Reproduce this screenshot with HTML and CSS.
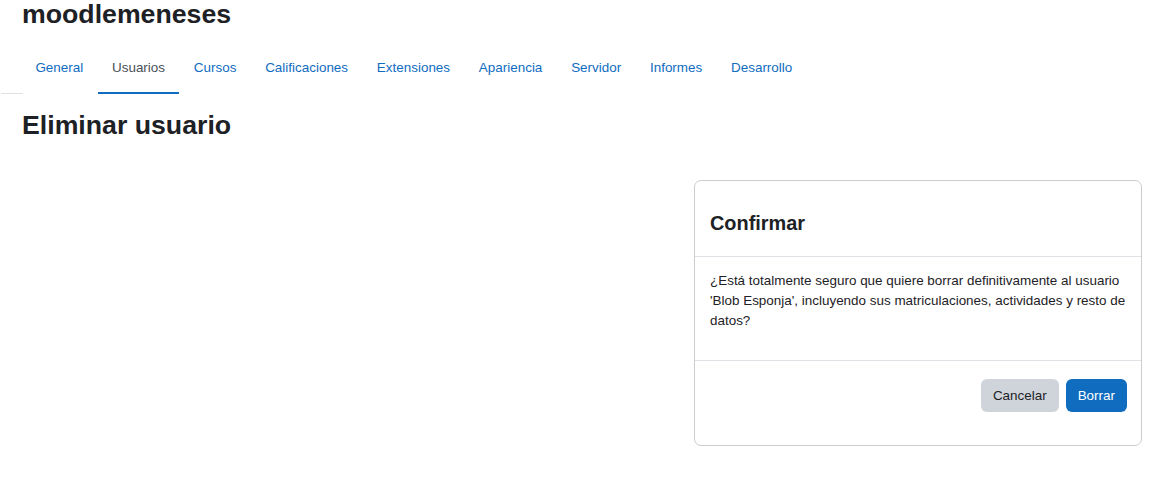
FILE: index.html
```html
<!DOCTYPE html>
<html lang="es">
<head>
<meta charset="utf-8">
<title>Eliminar usuario</title>
<link rel="stylesheet" href="styles.css">
</head>
<body>
<div class="page">
  <header class="page-header">
    <h1 class="site-title">moodlemeneses</h1>
  </header>
  <nav class="secondary-nav">
    <span class="nav-edge"></span>
    <ul class="nav-tabs">
      <li><a class="nav-link" href="#">General</a></li>
      <li><a class="nav-link active" href="#">Usuarios</a></li>
      <li><a class="nav-link" href="#">Cursos</a></li>
      <li><a class="nav-link" href="#">Calificaciones</a></li>
      <li><a class="nav-link" href="#">Extensiones</a></li>
      <li><a class="nav-link" href="#">Apariencia</a></li>
      <li><a class="nav-link" href="#">Servidor</a></li>
      <li><a class="nav-link" href="#">Informes</a></li>
      <li><a class="nav-link" href="#">Desarrollo</a></li>
    </ul>
  </nav>
  <main class="main">
    <h2 class="page-title">Eliminar usuario</h2>
    <div class="confirm-row">
      <div class="confirm-card">
        <div class="card-header">
          <h4 class="card-title">Confirmar</h4>
        </div>
        <div class="card-body">
          <p>¿Está totalmente seguro que quiere borrar definitivamente al usuario 'Blob Esponja', incluyendo sus matriculaciones, actividades y resto de datos?</p>
        </div>
        <div class="card-footer">
          <button class="btn btn-secondary" type="button">Cancelar</button>
          <button class="btn btn-primary" type="button">Borrar</button>
        </div>
      </div>
    </div>
  </main>
</div>
</body>
</html>
```

FILE: styles.css
```css
* {
  box-sizing: border-box;
}

html, body {
  margin: 0;
  padding: 0;
  background: #ffffff;
}

body {
  font-family: "Liberation Sans", Arial, sans-serif;
  font-size: 13.45px;
  line-height: 1.5;
  color: #1d2125;
  width: 1160px;
  height: 480px;
  overflow: hidden;
}

.page-header {
  padding: 0 22px;
}

.site-title {
  margin: -2px 0 0 0;
  font-size: 26.7px;
  line-height: 32px;
  font-weight: 700;
  color: #1d2125;
}

.secondary-nav {
  display: flex;
  align-items: flex-end;
  margin-top: 11px;
}

.nav-edge {
  display: block;
  width: 22px;
  height: 1px;
  background: #dee2e6;
  margin-left: 1px;
}

.nav-tabs {
  display: flex;
  list-style: none;
  margin: 0 0 0 -2px;
  padding: 0;
}

.nav-link {
  display: flex;
  align-items: center;
  height: 53px;
  padding: 3px 14.4px 0;
  color: #0f6cbf;
  text-decoration: none;
  border-bottom: 2px solid transparent;
}

.nav-link.active {
  color: #495057;
  border-bottom-color: #0f6cbf;
}

.main {
  padding: 0 18px 0 22px;
}

.page-title {
  margin: 14px 0 0 0;
  font-size: 26.7px;
  line-height: 34px;
  font-weight: 700;
  color: #1d2125;
}

.confirm-row {
  display: flex;
  justify-content: flex-end;
  margin-top: 38px;
}

.confirm-card {
  width: 448px;
  border: 1px solid #cdcdcd;
  border-radius: 7px;
  background: #fff;
}

.card-header {
  padding: 30px 15px 21px;
  border-bottom: 1px solid #dee2e6;
}

.card-title {
  margin: 0;
  font-size: 19.9px;
  line-height: 24px;
  font-weight: 700;
  color: #1d2125;
}

.card-body {
  padding: 14px 15px 29px;
}

.card-body p {
  margin: 0;
  line-height: 20px;
}

.card-footer {
  display: flex;
  justify-content: flex-end;
  gap: 7px;
  padding: 18px 14px 33px;
  border-top: 1px solid #dee2e6;
}

.btn {
  font-family: inherit;
  font-size: 13.45px;
  height: 33px;
  padding: 0 12px;
  border: none;
  border-radius: 6px;
  cursor: pointer;
}

.btn-secondary {
  background: #ced4da;
  color: #1d2125;
}

.btn-primary {
  background: #0f6cbf;
  color: #ffffff;
}
```
